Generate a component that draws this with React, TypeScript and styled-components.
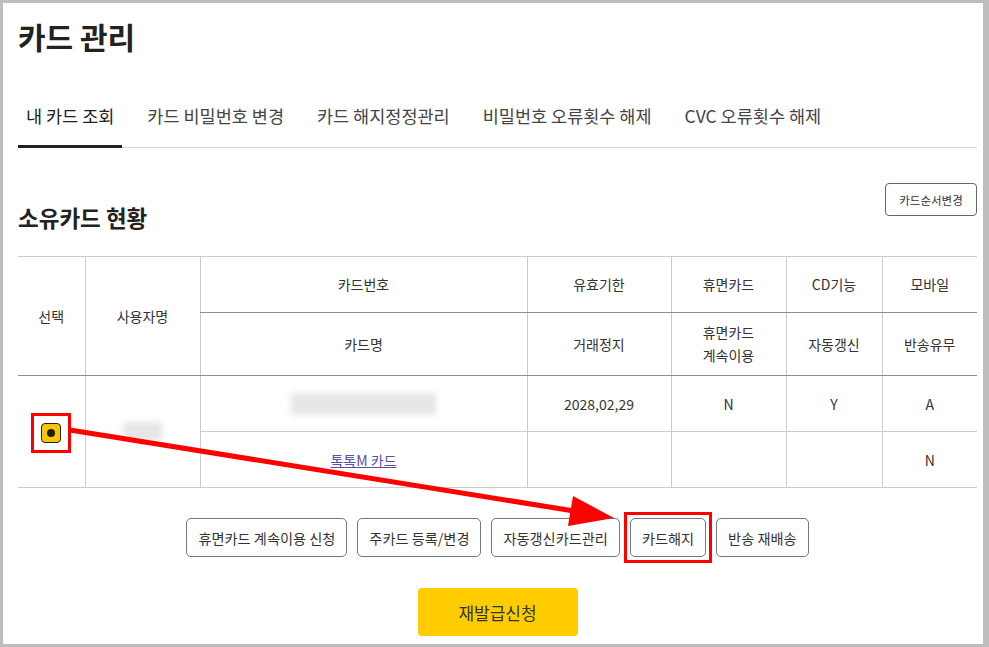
import styled, { createGlobalStyle } from "styled-components";

const GlobalStyle = createGlobalStyle`
  html, body {
    margin: 0;
    padding: 0;
    background: #bdbdbd;
  }
  body {
    font-family: "Noto Sans CJK KR", "Noto Sans", sans-serif;
    color: #333;
  }
`;

const Page = styled.div`
  position: relative;
  width: 989px;
  height: 647px;
  overflow: hidden;
`;

const Panel = styled.div`
  margin: 3px 6px 3px 3px;
  height: 641px;
  box-sizing: border-box;
  background: #fff;
  padding: 14px 6px 0 15px;
`;

const Title = styled.h1`
  margin: 0;
  font-size: 30px;
  line-height: 38px;
  font-weight: 700;
  color: #222;
`;

const TabBar = styled.ul`
  display: flex;
  gap: 17px;
  list-style: none;
  margin: 49px 0 0;
  padding: 0;
  border-bottom: 1px solid #d5d5d5;
`;

const Tab = styled.li<{ $active?: boolean }>`
  padding: 0 8px 17px;
  line-height: 24px;
  font-size: 17.5px;
  color: ${(p) => (p.$active ? "#222" : "#444")};
  border-bottom: 3px solid ${(p) => (p.$active ? "#222" : "transparent")};
  margin-bottom: -1px;
`;

const SectionHead = styled.div`
  display: flex;
  justify-content: space-between;
  align-items: flex-start;
  margin-top: 35px;
`;

const SectionTitle = styled.h2`
  margin: 19px 0 0;
  font-size: 22.5px;
  line-height: 30px;
  font-weight: 700;
  color: #222;
`;

const SmallButton = styled.button`
  width: 92px;
  height: 33px;
  border: 1px solid #666;
  border-radius: 4px;
  background: #fff;
  font-family: inherit;
  font-size: 11.5px;
  color: #333;
  padding: 0;
`;

const Table = styled.table`
  width: 100%;
  margin-top: 24px;
  border-collapse: collapse;
  table-layout: fixed;
  border-top: 1px solid #ccc;
`;

const Th = styled.th<{ $first?: boolean }>`
  font-weight: 400;
  font-size: 14px;
  color: #333;
  line-height: 23px;
  text-align: center;
  vertical-align: middle;
  border-left: ${(p) => (p.$first ? "none" : "1px solid #ccc")};
  border-bottom: 1px solid #8c8c8c;
  padding: 0;
`;

const Td = styled.td<{ $first?: boolean }>`
  text-align: center;
  vertical-align: middle;
  font-size: 14px;
  color: #333;
  border-left: ${(p) => (p.$first ? "none" : "1px solid #ccc")};
  border-bottom: 1px solid #ccc;
  padding: 0;
`;

const HeadRow = styled.tr<{ $h: number }>`
  height: ${(p) => p.$h}px;
`;

const BodyRow = styled.tr`
  height: 56px;
`;

const Marked = styled.span<{ $gap: number }>`
  position: relative;
  display: inline-flex;

  &::after {
    content: "";
    position: absolute;
    inset: ${(p) => -p.$gap}px;
    border: 3px solid #ff0000;
    pointer-events: none;
  }
`;

const Radio = styled.span`
  display: inline-flex;
  align-items: center;
  justify-content: center;
  width: 18px;
  height: 18px;
  border: 1px solid #222;
  border-radius: 4px;
  background: #f7c600;

  &::after {
    content: "";
    width: 8px;
    height: 8px;
    border-radius: 50%;
    background: #1e1e1e;
  }
`;

const Blur = styled.div<{ $w: number; $h: number }>`
  width: ${(p) => p.$w}px;
  height: ${(p) => p.$h}px;
  margin: 0 auto;
  background: #e6e6e6;
  filter: blur(3px);
`;

const CardLink = styled.a`
  color: #5b4ea6;
  text-decoration: underline;
  font-size: 14px;
`;

const ButtonRow = styled.div`
  display: flex;
  justify-content: center;
  align-items: center;
  gap: 10px;
  margin-top: 30px;
`;

const OutlineButton = styled.button`
  height: 39px;
  padding: 0 11px;
  border: 1px solid #777;
  border-radius: 5px;
  background: #fff;
  font-family: inherit;
  font-size: 14.2px;
  color: #333;
`;

const MainRow = styled.div`
  display: flex;
  justify-content: center;
  margin-top: 31px;
`;

const YellowButton = styled.button`
  width: 160px;
  height: 48px;
  border: none;
  border-radius: 4px;
  background: #ffcc00;
  font-family: inherit;
  font-size: 17px;
  color: #333;
`;

const Overlay = styled.svg`
  position: absolute;
  left: 0;
  top: 0;
  pointer-events: none;
`;

const tabs = ["내 카드 조회", "카드 비밀번호 변경", "카드 해지정정관리", "비밀번호 오류횟수 해제", "CVC 오류횟수 해제"];
const actions = ["휴면카드 계속이용 신청", "주카드 등록/변경", "자동갱신카드관리", "카드해지", "반송 재배송"];

export default function App() {
  return (
    <Page>
      <GlobalStyle />
      <Panel>
        <Title>카드 관리</Title>
        <TabBar>
          {tabs.map((t, i) => (
            <Tab key={t} $active={i === 0}>{t}</Tab>
          ))}
        </TabBar>

        <SectionHead>
          <SectionTitle>소유카드 현황</SectionTitle>
          <SmallButton>카드순서변경</SmallButton>
        </SectionHead>

        <Table>
          <colgroup>
            <col style={{ width: 67 }} />
            <col style={{ width: 115 }} />
            <col style={{ width: 327 }} />
            <col style={{ width: 144 }} />
            <col style={{ width: 115 }} />
            <col style={{ width: 96 }} />
            <col style={{ width: 95 }} />
          </colgroup>
          <thead>
            <HeadRow $h={56}>
              <Th rowSpan={2} $first>선택</Th>
              <Th rowSpan={2}>사용자명</Th>
              <Th>카드번호</Th>
              <Th>유효기한</Th>
              <Th>휴면카드</Th>
              <Th>CD기능</Th>
              <Th>모바일</Th>
            </HeadRow>
            <HeadRow $h={63}>
              <Th>카드명</Th>
              <Th>거래정지</Th>
              <Th>휴면카드<br />계속이용</Th>
              <Th>자동갱신</Th>
              <Th>반송유무</Th>
            </HeadRow>
          </thead>
          <tbody>
            <BodyRow>
              <Td rowSpan={2} $first>
                <Marked $gap={10}><Radio /></Marked>
              </Td>
              <Td rowSpan={2}><Blur $w={39} $h={19} /></Td>
              <Td><Blur $w={145} $h={22} /></Td>
              <Td>2028,02,29</Td>
              <Td>N</Td>
              <Td>Y</Td>
              <Td>A</Td>
            </BodyRow>
            <BodyRow>
              <Td><CardLink href="#">톡톡M 카드</CardLink></Td>
              <Td />
              <Td />
              <Td />
              <Td>N</Td>
            </BodyRow>
          </tbody>
        </Table>

        <ButtonRow>
          {actions.map((a) =>
            a === "카드해지" ? (
              <Marked key={a} $gap={6}><OutlineButton>{a}</OutlineButton></Marked>
            ) : (
              <OutlineButton key={a}>{a}</OutlineButton>
            )
          )}
        </ButtonRow>

        <MainRow>
          <YellowButton>재발급신청</YellowButton>
        </MainRow>
      </Panel>

      <Overlay width="989" height="647" viewBox="0 0 989 647">
        <line x1="70" y1="430" x2="574" y2="511" stroke="#ff0000" strokeWidth="5" />
        <polygon points="614,518 573,496 568,526" fill="#ff0000" />
      </Overlay>
    </Page>
  );
}
